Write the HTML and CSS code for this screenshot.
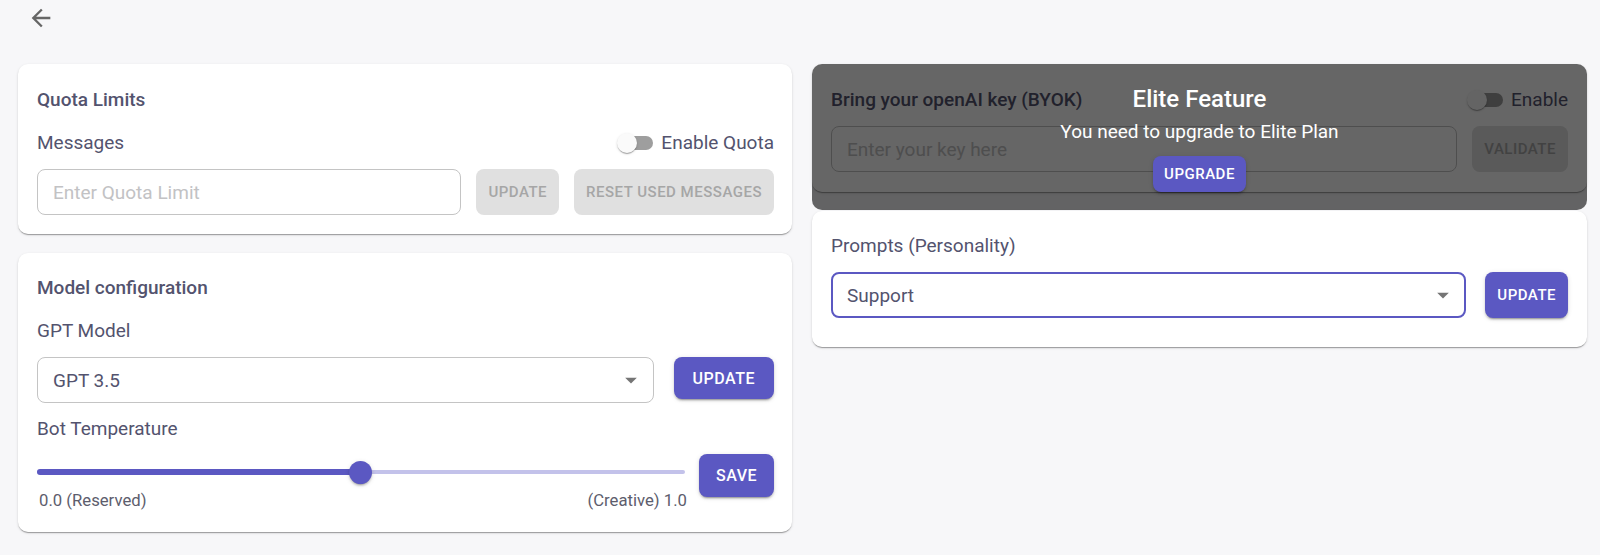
FILE: index.html
```html
<!DOCTYPE html>
<html>
<head>
<meta charset="utf-8">
<link rel="stylesheet" href="styles.css">
</head>
<body>
<div class="page">
  <div class="topbar">
    <svg class="back" viewBox="0 0 24 24" width="28" height="28"><path d="M20 11H7.830l5.590-5.590L12 4l-8 8 8 8 1.410-1.410L7.830 13H20v-2z"/></svg>
  </div>
  <div class="grid">
    <div class="col">
      <section class="card card-quota">
        <h2 class="title">Quota Limits</h2>
        <div class="row-between label-row">
          <span class="label">Messages</span>
          <span class="toggle"><span class="switch"></span><span class="label">Enable Quota</span></span>
        </div>
        <div class="field-row">
          <div class="input placeholder">Enter Quota Limit</div>
          <button class="btn disabled">Update</button>
          <button class="btn disabled">Reset used messages</button>
        </div>
      </section>
      <section class="card card-model">
        <h2 class="title">Model configuration</h2>
        <div class="label-row"><span class="label">GPT Model</span></div>
        <div class="field-row top">
          <div class="input select"><span>GPT 3.5</span><svg class="caret" viewBox="0 0 24 24" width="28" height="28"><path d="M7 10l5 5 5-5z"/></svg></div>
          <button class="btn primary big">Update</button>
        </div>
        <div class="label-row temp"><span class="label">Bot Temperature</span></div>
        <div class="slider-row">
          <div class="slider-col">
            <div class="slider">
              <div class="rail"></div>
              <div class="track" style="width:50%"></div>
              <div class="thumb" style="left:50%"></div>
            </div>
            <div class="slider-labels"><span>0.0 (Reserved)</span><span>(Creative) 1.0</span></div>
          </div>
          <button class="btn primary big save">Save</button>
        </div>
      </section>
    </div>
    <div class="col">
      <div class="locked">
        <section class="card card-byok">
          <div class="row-between title-row">
            <h2 class="title">Bring your openAI key (BYOK)</h2>
            <span class="toggle"><span class="switch"></span><span class="label">Enable</span></span>
          </div>
          <div class="field-row">
            <div class="input placeholder">Enter your key here</div>
            <button class="btn disabled">Validate</button>
          </div>
        </section>
        <div class="overlay">
          <div class="ov-title">Elite Feature</div>
          <div class="ov-sub">You need to upgrade to Elite Plan</div>
          <button class="btn primary upgrade">Upgrade</button>
        </div>
      </div>
      <section class="card card-prompts">
        <h2 class="title light">Prompts (Personality)</h2>
        <div class="field-row">
          <div class="input select focused"><span>Support</span><svg class="caret" viewBox="0 0 24 24" width="28" height="28"><path d="M7 10l5 5 5-5z"/></svg></div>
          <button class="btn primary">Update</button>
        </div>
      </section>
    </div>
  </div>
</div>
</body>
</html>
```

FILE: styles.css
```css
* { box-sizing: border-box; }
html, body { margin: 0; padding: 0; }
body {
  background: #f7f7f9;
  font-family: Roboto, "Liberation Sans", sans-serif;
  color: #53536e;
  width: 1600px;
  height: 555px;
  overflow: hidden;
}
.page { padding: 0 13px 0 18px; }
.topbar { height: 64px; padding: 4px 0 0 9px; }
.back { fill: #666; display: block; }
.grid {
  display: grid;
  grid-template-columns: 774px 775px;
  column-gap: 20px;
  align-items: start;
}
.col { display: flex; flex-direction: column; gap: 19px; }
.card {
  background: #fff;
  border-radius: 10px;
  box-shadow: 0 2px 1px -1px rgba(0,0,0,.2), 0 1px 1px 0 rgba(0,0,0,.14), 0 1px 3px 0 rgba(0,0,0,.12);
  padding: 24px 18px 19px 19px;
}
.title {
  margin: 0;
  font-size: 19px;
  font-weight: 500;
  line-height: 24px;
}
.title.light { font-weight: 400; }
.label { font-size: 19px; line-height: 24px; }
.row-between { display: flex; justify-content: space-between; align-items: center; }
.label-row { margin-top: 19px; height: 24px; display: flex; align-items: center; }
.label-row.temp { margin-top: 14px; }
.toggle { display: flex; align-items: center; gap: 8px; }
.switch {
  position: relative;
  width: 34px;
  height: 14px;
  border-radius: 7px;
  background: #9e9e9e;
  margin-left: 3px;
}
.switch::after {
  content: "";
  position: absolute;
  left: -2px;
  top: -3px;
  width: 20px;
  height: 20px;
  border-radius: 50%;
  background: #fafafa;
  box-shadow: 0 2px 1px -1px rgba(0,0,0,.2), 0 1px 1px 0 rgba(0,0,0,.14), 0 1px 3px 0 rgba(0,0,0,.12);
}
.field-row { display: flex; gap: 15px; margin-top: 14px; height: 46px; }
.field-row.top { gap: 20px; align-items: flex-start; }
.input {
  flex: 1;
  height: 46px;
  border: 1px solid #c4c4c4;
  border-radius: 8px;
  padding: 0 15px;
  display: flex;
  align-items: center;
  font-size: 19px;
  background: #fff;
}
.input.placeholder { color: #c2c2c4; }
.select { justify-content: space-between; padding-right: 8px; }
.select.focused { border: 2px solid #5b58c2; padding-left: 14px; padding-right: 7px; }
.caret { fill: #757575; display: block; }
.btn {
  font-family: Roboto, "Liberation Sans", sans-serif;
  border: 0;
  border-radius: 8px;
  text-transform: uppercase;
  font-size: 15px;
  font-weight: 500;
  letter-spacing: 0.5px;
  padding: 0 12px;
  height: 46px;
  white-space: nowrap;
}
.btn.disabled { background: #e0e0e0; color: #a6a6a6; }
.btn.primary {
  background: #5b58c2;
  color: #fff;
  box-shadow: 0 3px 1px -2px rgba(0,0,0,.2), 0 2px 2px 0 rgba(0,0,0,.14), 0 1px 5px 0 rgba(0,0,0,.12);
}
.btn.big { font-size: 16px; height: 42px; padding: 0 19px; }
.btn.save { height: 43px; padding: 0 17px; }
.card-model { padding-top: 23px; padding-bottom: 20px; }
.slider-row { display: flex; gap: 12px; margin-top: 13px; align-items: flex-start; }
.slider-col { flex: 1; }
.slider { position: relative; height: 36px; margin-right: 2px; }
.rail {
  position: absolute; left: 0; right: 0; top: 16px; height: 4px;
  background: #c3c2ea; border-radius: 2px;
}
.track {
  position: absolute; left: 0; top: 15px; height: 6px;
  background: #5b58c2; border-radius: 3px;
}
.thumb {
  position: absolute; top: 7px; width: 23px; height: 23px; margin-left: -11.5px;
  border-radius: 50%; background: #5b58c2;
  box-shadow: 0 3px 1px -2px rgba(0,0,0,.2), 0 2px 2px 0 rgba(0,0,0,.14), 0 1px 5px 0 rgba(0,0,0,.12);
}
.slider-labels {
  display: flex; justify-content: space-between;
  font-size: 16.7px; line-height: 22px; color: #5d5d6d; padding-left: 2px;
}
.locked { position: relative; padding-bottom: 18px; }
.card-byok { padding-right: 19px; padding-bottom: 20px; }
.title-row { height: 24px; }
.overlay {
  position: absolute; inset: 0;
  background: rgba(0,0,0,.6);
  border-radius: 10px;
  display: flex; flex-direction: column; align-items: center;
  padding-top: 21px;
  color: #fff;
}
.ov-title { font-size: 24px; font-weight: 500; line-height: 28px; }
.ov-sub { font-size: 19px; line-height: 24px; margin-top: 7px; }
.btn.upgrade { height: 36px; margin-top: 12px; padding: 0 11px; font-size: 15px; }
.col > .locked + .card { margin-top: -18px; }
.card-prompts { padding-top: 23px; padding-bottom: 29px; padding-right: 19px; }
.card-prompts .field-row { gap: 19px; }
```
